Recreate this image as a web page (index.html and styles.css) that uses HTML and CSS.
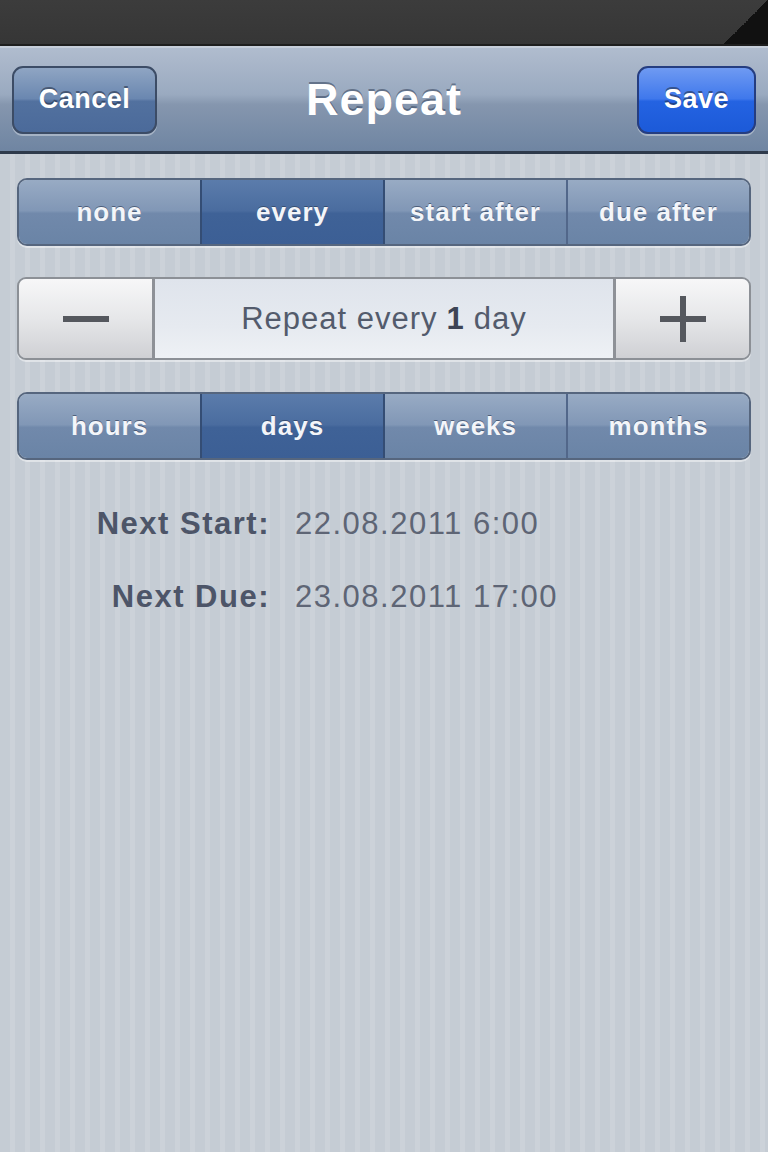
FILE: index.html
```html
<!DOCTYPE html>
<html>
<head>
<meta charset="utf-8">
<link rel="stylesheet" href="styles.css">
</head>
<body>
<div class="screen">
  <div class="status">
    <div class="status-fill"></div>
    <div class="corner"></div>
  </div>
  <div class="navbar">
    <div class="nav-left"><div class="btn btn-cancel">Cancel</div></div>
    <div class="title">Repeat</div>
    <div class="nav-right"><div class="btn btn-save">Save</div></div>
  </div>
  <div class="content">
    <div class="seg">
      <div class="seg-item">none</div>
      <div class="seg-item sel">every</div>
      <div class="seg-item">start after</div>
      <div class="seg-item">due after</div>
    </div>
    <div class="stepper">
      <div class="step-btn">
        <svg width="48" height="48" viewBox="0 0 48 48"><rect x="1" y="21" width="46" height="6" fill="#55585e"/></svg>
      </div>
      <div class="step-field">Repeat every <b>1</b> day</div>
      <div class="step-btn">
        <svg width="48" height="48" viewBox="0 0 48 48"><rect x="1" y="21" width="46" height="6" fill="#55585e"/><rect x="21" y="1" width="6" height="46" fill="#55585e"/></svg>
      </div>
    </div>
    <div class="seg">
      <div class="seg-item">hours</div>
      <div class="seg-item sel">days</div>
      <div class="seg-item">weeks</div>
      <div class="seg-item">months</div>
    </div>
    <div class="info">
      <div class="lbl">Next Start:</div><div class="val">22.08.2011 6:00</div>
      <div class="lbl">Next Due:</div><div class="val">23.08.2011 17:00</div>
    </div>
  </div>
</div>
</body>
</html>
```
FILE: styles.css
```css
html, body {
  margin: 0;
  padding: 0;
}
* { box-sizing: border-box; }
body {
  width: 768px;
  height: 1152px;
  overflow: hidden;
  font-family: "Liberation Sans", Arial, sans-serif;
  background: repeating-linear-gradient(90deg, #c5ccd4 0 10px, #ccd2d9 10px 15px);
}
.screen {
  display: flex;
  flex-direction: column;
  height: 1152px;
}
.status {
  height: 46px;
  display: flex;
  background: linear-gradient(#3c3c3c, #363636);
  border-bottom: 2px solid #1e1e1e;
}
.status-fill { flex: 1; }
.corner {
  width: 44px;
  background: linear-gradient(to bottom right, transparent 50%, #111 50%);
}
.navbar {
  height: 108px;
  border-top: 2px solid #c6ceda;
  border-bottom: 3px solid #2e3a4b;
  background: linear-gradient(#b0bcce 0%, #9aaac0 45%, #8596ae 55%, #6f85a2 100%);
  display: grid;
  grid-template-columns: 1fr auto 1fr;
  align-items: center;
  padding: 0 12px;
}
.nav-left { display: flex; justify-content: flex-start; }
.nav-right { display: flex; justify-content: flex-end; }
.btn {
  height: 68px;
  border-radius: 11px;
  border: 2px solid #3c4c66;
  display: flex;
  align-items: center;
  justify-content: center;
  color: #fff;
  font-weight: bold;
  font-size: 27px;
  letter-spacing: 0.5px;
  text-shadow: 0 -2px 0 rgba(30,40,60,0.55);
  box-shadow: 0 2px 0 rgba(255,255,255,0.35);
}
.btn-cancel {
  width: 145px;
  background: linear-gradient(#8fa5c3 0%, #6a87b0 48%, #52719f 52%, #4b6a9a 100%);
}
.btn-save {
  width: 119px;
  border-color: #253d80;
  background: linear-gradient(#6f9af2 0%, #3f78ec 48%, #2463e2 52%, #1c5ad8 100%);
}
.title {
  color: #fff;
  font-weight: bold;
  font-size: 45px;
  letter-spacing: 1px;
  text-shadow: 0 -2px 0 rgba(60,75,100,0.6);
}
.content {
  padding: 24px 17px 0 17px;
  display: flex;
  flex-direction: column;
}
.seg {
  height: 68px;
  display: flex;
  border: 2px solid #56667e;
  border-radius: 10px;
  overflow: hidden;
  box-shadow: 0 2px 0 rgba(255,255,255,0.45);
  margin-bottom: 31px;
}
.seg-item {
  flex: 1;
  display: flex;
  align-items: center;
  justify-content: center;
  color: #f3f5f9;
  font-weight: bold;
  font-size: 26px;
  letter-spacing: 1px;
  text-shadow: 0 -1px 0 rgba(40,55,80,0.6);
  background: linear-gradient(#98abc4 0%, #8197b6 48%, #7189ab 52%, #6a84a6 100%);
  border-left: 2px solid #52678a;
}
.seg-item:first-child { border-left: none; }
.seg-item.sel {
  background: linear-gradient(#5b7cab 0%, #4a6c9f 48%, #3f6297 52%, #3c5f95 100%);
  border-left-color: #344d74;
}
.seg-item.sel + .seg-item { border-left-color: #344d74; }
.stepper {
  height: 83px;
  display: flex;
  border: 2px solid #8c9096;
  border-radius: 9px;
  overflow: hidden;
  box-shadow: 0 2px 0 rgba(255,255,255,0.45);
  margin-bottom: 32px;
}
.step-btn {
  width: 133px;
  display: flex;
  align-items: center;
  justify-content: center;
  background: linear-gradient(#f7f7f8 0%, #e6e7e9 50%, #cfd0d4 100%);
}
.step-field {
  flex: 1;
  display: flex;
  align-items: center;
  justify-content: center;
  border-left: 3px solid #8e9197;
  border-right: 3px solid #8e9197;
  background: linear-gradient(#dfe4ec 0%, #e6eaf0 60%, #eef1f5 100%);
  color: #535b6c;
  font-size: 31px;
  letter-spacing: 1px;
}
.step-field b {
  margin: 0 9px;
  color: #3d4455;
}
.info {
  display: grid;
  grid-template-columns: 253px auto;
  column-gap: 25px;
  row-gap: 33px;
  margin-top: 13px;
  font-size: 31px;
  letter-spacing: 1.5px;
  line-height: 40px;
}
.lbl {
  text-align: right;
  font-weight: bold;
  color: #4d5568;
}
.val {
  color: #5e6575;
}
```
